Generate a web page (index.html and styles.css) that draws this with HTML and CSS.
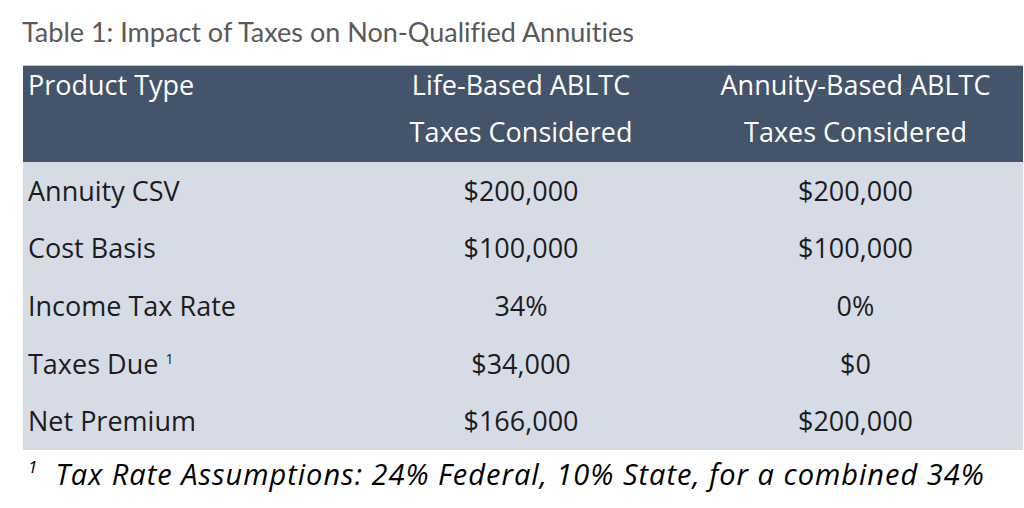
FILE: index.html
```html
<!DOCTYPE html>
<html lang="en">
<head>
<meta charset="utf-8">
<title>Table 1</title>
<link rel="stylesheet" href="styles.css">
</head>
<body>
<div class="page">
  <h1 class="caption">Table 1: Impact of Taxes on Non-Qualified Annuities</h1>
  <div class="table">
    <div class="head">
      <div class="cell first"><span class="inner">Product Type</span></div>
      <div class="cell"><span class="inner">Life-Based ABLTC<br>Taxes Considered</span></div>
      <div class="cell"><span class="inner">Annuity-Based ABLTC<br>Taxes Considered</span></div>
    </div>
    <div class="body">
      <div class="row"><div class="cell first">Annuity CSV</div><div class="cell">$200,000</div><div class="cell">$200,000</div></div>
      <div class="row"><div class="cell first">Cost Basis</div><div class="cell">$100,000</div><div class="cell">$100,000</div></div>
      <div class="row"><div class="cell first">Income Tax Rate</div><div class="cell">34%</div><div class="cell">0%</div></div>
      <div class="row"><div class="cell first">Taxes Due <sup class="sup">1</sup></div><div class="cell">$34,000</div><div class="cell">$0</div></div>
      <div class="row"><div class="cell first">Net Premium</div><div class="cell">$166,000</div><div class="cell">$200,000</div></div>
    </div>
  </div>
  <p class="note"><sup class="note-sup">1</sup><span class="note-text">Tax Rate Assumptions: 24% Federal, 10% State, for a combined 34%</span></p>
</div>
</body>
</html>
```
FILE: styles.css
```css
html, body {
  margin: 0;
  padding: 0;
  background: #ffffff;
}

.page {
  width: 1024px;
  height: 508px;
  overflow: hidden;
  font-family: "Open Sans", "DejaVu Sans", sans-serif;
}

.caption {
  margin: 0;
  padding: 17px 0 0 22px;
  height: 65px;
  box-sizing: border-box;
  font-family: "Lato", "Open Sans", sans-serif;
  font-variant-ligatures: none;
  font-weight: 400;
  font-size: 27px;
  line-height: 30px;
  color: #595959;
}

.table {
  margin-left: 23px;
  width: 1000px;
}

.head {
  display: grid;
  grid-template-columns: 331px 334px 335px;
  height: 97px;
  background: #44546a;
  border-top: 1px solid #b9c0ca;
  box-sizing: border-box;
  color: #ffffff;
  font-size: 27px;
  line-height: 47px;
}

.head .cell {
  text-align: center;
}

.head .inner {
  display: block;
  margin-top: -5px;
}

.head .cell.first {
  text-align: left;
  padding-left: 5px;
}

.body {
  background: #d6dce5;
  color: #1c1c1c;
  font-size: 27px;
}

.row {
  display: grid;
  grid-template-columns: 331px 334px 335px;
  height: 57.6px;
  align-items: center;
}

.row .cell {
  text-align: center;
  line-height: 36px;
}

.row .cell.first {
  text-align: left;
  padding-left: 5px;
}

.sup {
  font-size: 14px;
  vertical-align: top;
  line-height: 14px;
  position: relative;
  top: 6px;
}

.note {
  margin: 0;
  padding: 6px 0 0 28px;
  font-style: italic;
  font-size: 29px;
  letter-spacing: 1px;
  line-height: 36px;
  color: #000000;
}

.note-sup {
  font-size: 17px;
  letter-spacing: 0;
  vertical-align: top;
  line-height: 17px;
  position: relative;
  top: 2px;
  margin-right: 18px;
}
```
